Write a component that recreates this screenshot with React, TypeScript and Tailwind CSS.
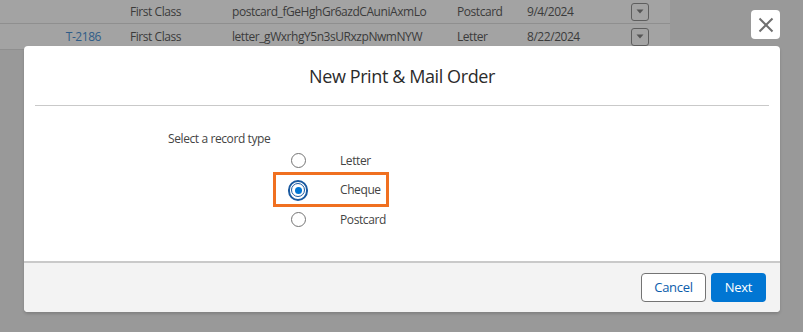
import React from "react";

const font = { fontFamily: '"Open Sans", "Noto Sans", sans-serif' };

function DropBtn() {
  return (
    <div className="w-[18px] h-[18px] rounded-[3px] border border-[#5e5e5e] flex items-center justify-center">
      <svg width="8" height="5" viewBox="0 0 8 5">
        <path d="M0.5 0.5 L7.5 0.5 L4 4.5 Z" fill="#555" />
      </svg>
    </div>
  );
}

function Row({ id, type, name, kind, date, h }: { id: string; type: string; name: string; kind: string; date: string; h: string }) {
  return (
    <div className={`flex items-center ${h} border-b border-[#8f8f8f] text-[12px] tracking-[-0.45px] text-[#3b3b3b]`}>
      <div className="w-[101px] text-right text-[#2f5c88]">{id}</div>
      <div className="w-[102px] pl-[29px] whitespace-nowrap">{type}</div>
      <div className="w-[225px] pl-[29px] whitespace-nowrap">{name}</div>
      <div className="w-[70px] pl-[29px] whitespace-nowrap">{kind}</div>
      <div className="w-[104px] pl-[29px]">{date}</div>
      <div className="pl-[29px]"><DropBtn /></div>
    </div>
  );
}

function Radio({ checked }: { checked?: boolean }) {
  if (checked) {
    return (
      <div className="w-[21px] h-[21px] rounded-full border-[2px] border-[#1b5aa0] flex items-center justify-center bg-white">
        <div className="w-[14px] h-[14px] rounded-full border border-[#1b5aa0] flex items-center justify-center">
          <div className="w-[7px] h-[7px] rounded-full bg-[#0176d3]" />
        </div>
      </div>
    );
  }
  return <div className="w-[15px] h-[15px] rounded-full border border-[#747474] bg-white" />;
}

export default function App() {
  return (
    <div className="relative w-[803px] h-[332px] bg-[#999999] overflow-hidden" style={font}>
      <div className="w-[670px] bg-[#a3a3a3]">
        <Row id="" type="First Class" name="postcard_fGeHghGr6azdCAuniAxmLo" kind="Postcard" date="9/4/2024" h="h-[24px]" />
        <Row id="T-2186" type="First Class" name="letter_gWxrhgY5n3sURxzpNwmNYW" kind="Letter" date="8/22/2024" h="h-[26px]" />
      </div>

      <button className="absolute left-[751px] top-[10px] w-[29px] h-[29px] rounded-[4px] bg-white flex items-center justify-center">
        <svg width="16" height="16" viewBox="0 0 16 16">
          <path d="M1.5 1.5 L14.5 14.5 M14.5 1.5 L1.5 14.5" stroke="#6f6f6f" strokeWidth="2" />
        </svg>
      </button>

      <div className="absolute left-[24px] top-[46px] w-[756px] h-[266px] bg-white rounded-[4px] flex flex-col shadow-[0_2px_3px_rgba(0,0,0,0.16)] overflow-hidden">
        <div className="mx-[11px] h-[60px] border-b border-[#c9c9c9] flex items-center justify-center">
          <h2 className="text-[18px] tracking-[-0.4px] text-[#2b2b2b] mt-[2px]">New Print &amp; Mail Order</h2>
        </div>
        <div className="flex-1 relative text-[12px] tracking-[-0.4px] text-[#444]">
          <div className="absolute left-[144px] top-[24px]">Select a record type</div>
          <div className="absolute left-[264px] top-[40px] flex flex-col">
            <div className="h-[29px] flex items-center">
              <div className="w-[20px] flex justify-center"><Radio /></div>
              <span className="ml-[32px]">Letter</span>
            </div>
            <div className="h-[30px] flex items-center">
              <div className="w-[20px] flex justify-center"><Radio checked /></div>
              <span className="ml-[32px]">Cheque</span>
            </div>
            <div className="h-[29px] flex items-center">
              <div className="w-[20px] flex justify-center"><Radio /></div>
              <span className="ml-[32px]">Postcard</span>
            </div>
          </div>
          <div className="absolute left-[249px] top-[66px] w-[116px] h-[35px] border-[3px] border-[#f07020]" />
        </div>
        <div className="h-[51px] bg-[#f3f3f3] border-t-[2px] border-[#c9c9c9] flex items-center justify-end pr-[14px] gap-[5px]">
          <button className="w-[65px] h-[29px] rounded-[4px] border border-[#747474] bg-white text-[13px] tracking-[-0.3px] text-[#0b5cab]">Cancel</button>
          <button className="w-[55px] h-[29px] rounded-[4px] bg-[#0176d3] text-[13px] tracking-[-0.3px] text-white">Next</button>
        </div>
      </div>
    </div>
  );
}
